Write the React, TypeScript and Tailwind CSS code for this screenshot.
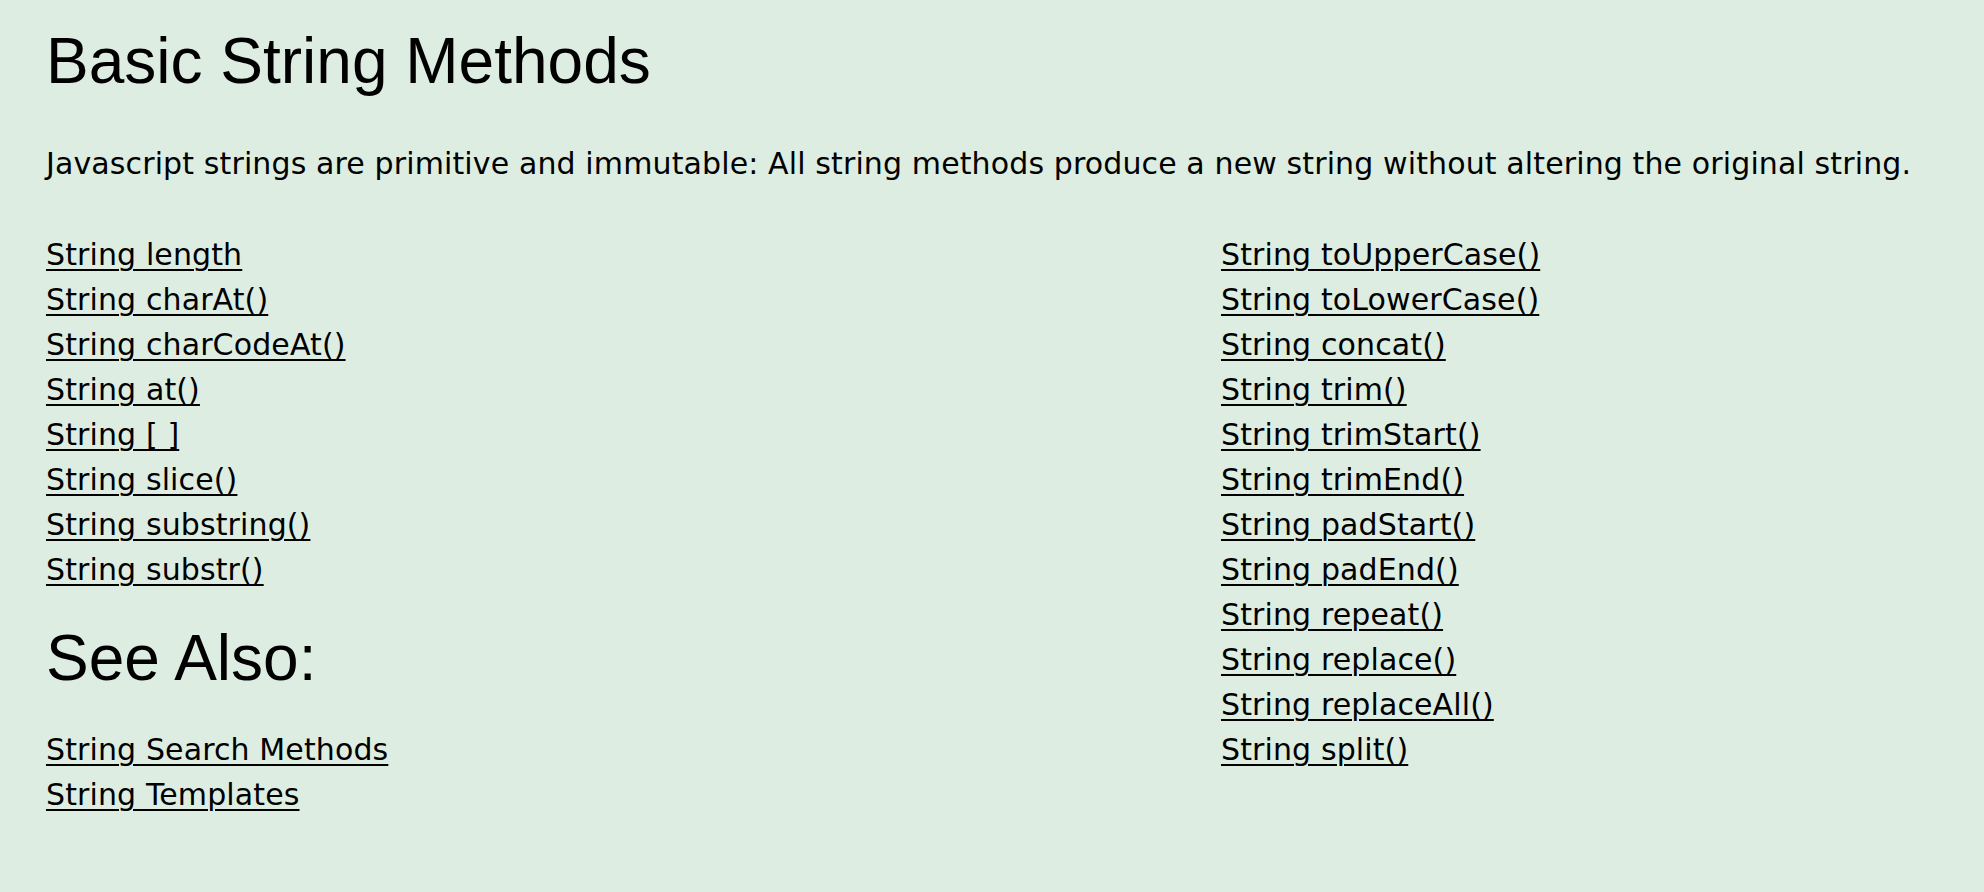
const basicMethods = [
  'String length',
  'String charAt()',
  'String charCodeAt()',
  'String at()',
  'String [ ]',
  'String slice()',
  'String substring()',
  'String substr()',
];

const moreMethods = [
  'String toUpperCase()',
  'String toLowerCase()',
  'String concat()',
  'String trim()',
  'String trimStart()',
  'String trimEnd()',
  'String padStart()',
  'String padEnd()',
  'String repeat()',
  'String replace()',
  'String replaceAll()',
  'String split()',
];

const seeAlso = ['String Search Methods', 'String Templates'];

const linkCls = 'block w-fit underline decoration-2 underline-offset-[4px] text-black';

export default function App() {
  return (
    <div className="min-h-screen bg-[#ddede2] pl-[46px] pt-[29px] text-black font-['DejaVu_Sans',Verdana,sans-serif]">
      <h1 className="text-[64px] leading-[64px] font-normal font-['Liberation_Sans',Arial,sans-serif]">
        Basic String Methods
      </h1>

      <p className="mt-[48px] text-[30px] leading-[45px] tracking-[0.12px]">
        Javascript strings are primitive and immutable: All string methods produce a new string without altering the original string.
      </p>

      {/* two link columns */}
      <div className="mt-[46px] grid grid-cols-[1175px_1fr] text-[30px] leading-[45px] tracking-[0.12px]">
        <div>
          {basicMethods.map((m) => (
            <a key={m} href="#" className={linkCls}>
              {m}
            </a>
          ))}

          <h2 className="mt-[34px] text-[64px] leading-[64px] font-normal tracking-normal font-['Liberation_Sans',Arial,sans-serif]">
            See Also:
          </h2>

          <div className="mt-[37px]">
            {seeAlso.map((m) => (
              <a key={m} href="#" className={linkCls}>
                {m}
              </a>
            ))}
          </div>
        </div>

        <div>
          {moreMethods.map((m) => (
            <a key={m} href="#" className={linkCls}>
              {m}
            </a>
          ))}
        </div>
      </div>
    </div>
  );
}
